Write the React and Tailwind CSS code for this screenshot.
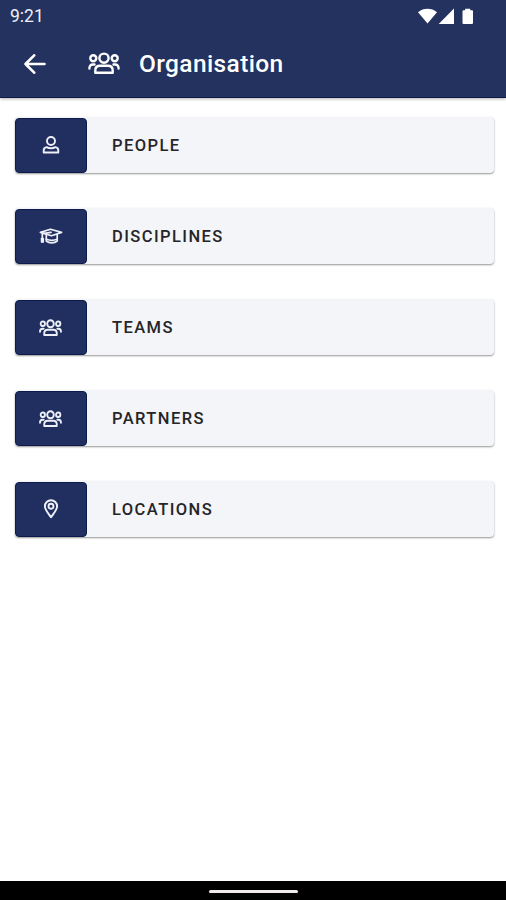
const GroupIcon = ({ className, strokeWidth = 2.4 }) => (
  <svg viewBox="0 0 32 22" preserveAspectRatio="none" className={className} fill="none" stroke="currentColor" strokeWidth={strokeWidth} strokeLinecap="round">
    <circle cx="16" cy="6.200" r="4.600" />
    <circle cx="5.300" cy="6.200" r="3" />
    <circle cx="26.700" cy="6.200" r="3" />
    <path d="M1.400 16.500c0-2.600 1.300-4 3.500-4h1.600M30.600 16.500c0-2.600-1.300-4-3.500-4h-1.600" />
    <path d="M7.300 20.700v-2.200c0-3 1.900-4.700 4.700-4.700h8c2.800 0 4.700 1.700 4.700 4.700v2.200z" strokeLinejoin="round" />
  </svg>
);

const PersonIcon = ({ className }) => (
  <svg viewBox="0 0 18 18" className={className} fill="none" stroke="currentColor" strokeWidth="1.900" strokeLinejoin="round">
    <circle cx="9" cy="5" r="4" />
    <path d="M4.700 11.100c1.300.8 2.700 1.200 4.300 1.200s3-.4 4.300-1.200c2 .2 3 1.600 3 3.400v2H1.700v-2c0-1.800 1-3.200 3-3.400z" />
  </svg>
);

const CapIcon = ({ className }) => (
  <svg viewBox="0 0 24 16" className={className} fill="none" stroke="currentColor" strokeWidth="1.700" strokeLinejoin="round" strokeLinecap="round">
    <path d="M1.400 4.400 11.500 1.200 22.600 4.400 12.500 7.800z" />
    <path d="M12 4.400 3.300 5.700v8" />
    <path d="M2.600 10.500v3.500h1.600v-3.500z" />
    <path d="M7.300 6.800V13c2.700 2.400 8.200 2.400 10.900 0V6.500" />
    <path d="M7.300 11.300c3 1.200 7.900 1.200 10.900 0" />
  </svg>
);

const PinIcon = ({ className }) => (
  <svg viewBox="0 0 16 20" className={className} fill="none" stroke="currentColor" strokeWidth="1.900" strokeLinejoin="round">
    <path d="M8 18.300C5.500 14.500 1.900 11 1.900 7.300a6.100 6.100 0 0 1 12.200 0C14.100 11 10.500 14.500 8 18.300z" />
    <circle cx="8" cy="7.200" r="2.500" />
  </svg>
);

const items = [
  { label: 'PEOPLE', icon: <PersonIcon className="w-[18px] h-[18px]" /> },
  { label: 'DISCIPLINES', icon: <CapIcon className="w-6 h-4" /> },
  { label: 'TEAMS', icon: <GroupIcon className="w-[23px] h-[17px]" strokeWidth={2.6} /> },
  { label: 'PARTNERS', icon: <GroupIcon className="w-[23px] h-[17px]" strokeWidth={2.6} /> },
  { label: 'LOCATIONS', icon: <PinIcon className="w-4 h-5" /> },
];

const StatusBar = () => (
  <div className="h-8 pl-[10px] pr-[31px] flex items-center justify-between">
    <span className="text-[17.500px] leading-8 text-[#eef0f6]">9:21</span>
    <svg viewBox="0 0 58 18" className="w-[58px] h-[18px]" fill="white">
      <path d="M1 5.200C6.500.6 14.500.6 20 5.200L10.500 16.500z" />
      <path d="M37 1.500v15.500H21.700z" />
      <path d="M46.500 3.200h1.700V1.800h5v1.400H55q1 0 1 1v11.800q0 1-1 1h-8.500q-1 0-1-1V4.200q0-1 1-1z" />
    </svg>
  </div>
);

const App = () => {
  return (
    <div className="w-full h-screen flex flex-col bg-white font-[Roboto,sans-serif] overflow-hidden">
      <header className="h-[98px] shrink-0 bg-[#23325f] text-white border-b border-[#0d1a49] shadow-[0_1px_3px_rgba(0,0,0,0.3)]">
        <StatusBar />
        <div className="h-16 pl-6 flex items-center">
          <svg viewBox="0 0 22 20" className="w-[22px] h-5" fill="none" stroke="currentColor" strokeWidth="2.600" strokeLinecap="round" strokeLinejoin="round">
            <path d="M10.200 1.300 1.500 10l8.700 8.700M1.500 10h19" />
          </svg>
          <GroupIcon className="w-8 h-[22px] ml-[42px] mb-[2px]" />
          <h1 className="ml-[19px] text-[24.500px] tracking-[0.380px] font-medium leading-none">Organisation</h1>
        </div>
      </header>

      <main className="flex-1 pl-[15px] pr-3 pt-[19px] flex flex-col gap-[35px]">
        {items.map((item) => (
          <button
            key={item.label}
            className="h-14 flex items-center rounded-[4px] bg-[#f4f5f9] shadow-[0_1px_2px_rgba(0,0,0,0.42)] text-left"
          >
            <span className="w-18 h-[55px] mt-px rounded-[4px] bg-[#202f60] border border-[#0d1a4c] flex items-center justify-center pb-px pr-px text-[#eef0f8]">
              {item.icon}
            </span>
            <span className="ml-[25px] mt-[2px] text-[16.500px] font-medium tracking-[1.430px] text-[#252528]">{item.label}</span>
          </button>
        ))}
      </main>

      {/* System navigation bar */}
      <footer className="h-[19px] shrink-0 bg-black flex items-center justify-center">
        <div className="w-[89px] h-[3px] mt-[2px] rounded-full bg-[#eeeaee]" />
      </footer>
    </div>
  );
};

export default App;
